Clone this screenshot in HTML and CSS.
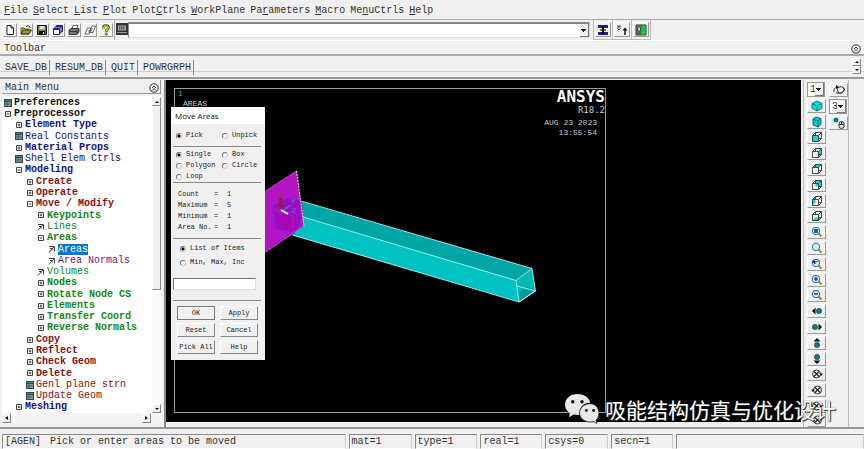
FILE: index.html
```html
<!DOCTYPE html>
<html lang="en">
<head>
<meta charset="utf-8">
<title>ANSYS Multiphysics Utility Menu</title>
<link rel="stylesheet" href="styles.css">
</head>
<body>
<svg class="defs" aria-hidden="true">
  <symbol id="plus" viewBox="0 0 8 8"><path d="M1.5 1.5h5v5h-5zM2.500 4h3M4 2.500v3" fill="none" stroke="#444" stroke-width="1"/></symbol>
  <symbol id="minus" viewBox="0 0 8 8"><path d="M1.500 1.500h5v5h-5zM2.500 4h3" fill="none" stroke="#444" stroke-width="1"/></symbol>
  <symbol id="form" viewBox="0 0 8 8"><path d="M0 0h8v8H0z" fill="#345"/><path d="M1 1h6v1H1z" fill="#299"/><path d="M1 3h6v4H1z" fill="#8b9a90"/><path d="M1 5h6M3 3v4" stroke="#345" stroke-width=".7"/></symbol>
  <symbol id="pick" viewBox="0 0 8 8"><path d="M1 1.500h5.500v5M6 2L3.500 4.500M2 3.500h2v2M3.500 4.500L1 7.500" fill="none" stroke="#444" stroke-width="1"/></symbol>
  <symbol id="chev" viewBox="0 0 10 10"><circle cx="5" cy="5" r="4.200" fill="none" stroke="#333"/><path d="M3 5l2-2 2 2M3 7.500l2-2 2 2" fill="none" stroke="#333"/></symbol>
  <symbol id="cube" viewBox="0 0 12 12"><path d="M1 3.500L6 1l5 2.500v5L6 11 1 8.500z" fill="#0dd" stroke="#066" stroke-width=".8"/><path d="M1 3.500L6 6l5-2.500M6 6v5" fill="none" stroke="#066" stroke-width=".8"/></symbol>
  <symbol id="cubeb" viewBox="0 0 12 12"><path d="M2 3l3-2 5 1.500v6L7 11 2 9z" fill="#0cd" stroke="#055" stroke-width=".8"/><path d="M2 3l5 2 3-2.500M7 5v6" fill="none" stroke="#055" stroke-width=".8"/></symbol>
  <symbol id="wire" viewBox="0 0 12 12"><path d="M1.500 4.500h6v6h-6zM4.500 1.500h6v6h-3M4.500 1.500v3M1.500 4.500l3-3M7.500 4.500l3-3M7.500 10.500l3-3" fill="none" stroke="#333" stroke-width=".9"/></symbol>
  <symbol id="lens" viewBox="0 0 12 12"><path d="M7.500 7.500l3 3" stroke="#a82" stroke-width="2"/><circle cx="5" cy="5" r="3.700" fill="#cef" stroke="#468" stroke-width="1"/></symbol>
  <symbol id="spin" viewBox="0 0 12 12"><circle cx="5.500" cy="6" r="4" fill="none" stroke="#333"/><path d="M3 3.500l5 5M8 3.500l-5 5" stroke="#222" stroke-width="1.200"/><path d="M8.500 5.500h3.500L10 8z" fill="#111"/></symbol>
  <symbol id="pan" viewBox="0 0 12 12"><path d="M1 6l3.500-3.500v7z" fill="#111"/><circle cx="8" cy="6" r="2.700" fill="#177" stroke="#244" stroke-width=".5"/></symbol>
</svg>

<nav class="menubar">
  <a href="#"><u>F</u>ile</a><a href="#"><u>S</u>elect</a><a href="#"><u>L</u>ist</a><a href="#"><u>P</u>lot</a><a href="#">Plot<u>C</u>trls</a><a href="#"><u>W</u>orkPlane</a><a href="#">Pa<u>r</u>ameters</a><a href="#"><u>M</u>acro</a><a href="#">Me<u>n</u>uCtrls</a><a href="#"><u>H</u>elp</a>
</nav>

<div class="iconbar">
  <div class="files">
    <button class="tool" aria-label="New"><svg viewBox="0 0 12 12"><path d="M3 1.500h4l2.500 2.500v6.500H3zM7 1.500V4h2.500" fill="#fff" stroke="#222"/></svg></button>
    <button class="tool" aria-label="Open"><svg viewBox="0 0 12 12"><path d="M1 10V4h3l1 1h4v5z" fill="#cc2" stroke="#332" stroke-width=".8"/><path d="M1 10l2-4h8.500L9 10z" fill="#992" stroke="#221" stroke-width=".8"/><path d="M6 2.500q2-2 4 .5V4" fill="none" stroke="#222"/></svg></button>
    <button class="tool" aria-label="Save"><svg viewBox="0 0 12 12"><path d="M1.500 1.500h9v9h-9z" fill="#773" stroke="#111"/><path d="M3.500 2h5v3.500h-5z" fill="#ddd"/><path d="M3 7h6v4H3z" fill="#111"/><path d="M7 8h1v2H7z" fill="#fff"/></svg></button>
    <button class="tool" aria-label="Copies"><svg viewBox="0 0 12 12"><path d="M4.500 1.500h6v6h-6z" fill="#dde" stroke="#228"/><path d="M3 3h6v6H3z" fill="#dde" stroke="#228"/><path d="M1.500 4.500h6v6h-6z" fill="#fff" stroke="#228"/><path d="M4.500 1.500h6v1.500h-6zM1.500 4.500h6V6h-6z" fill="#22a"/></svg></button>
    <button class="tool" aria-label="Print"><svg viewBox="0 0 12 12"><path d="M4 5l1-3.500h5L8.500 5z" fill="#fff" stroke="#333" stroke-width=".8"/><path d="M1 6l2-1.500h8V8l-2 2.500H1z" fill="#777" stroke="#222" stroke-width=".8"/><path d="M1.500 7.500H9M9 10V7.500l2-2" stroke="#222" fill="none" stroke-width=".8"/></svg></button>
    <button class="tool" aria-label="Report"><svg viewBox="0 0 12 12"><path d="M1 10l2.500-6H7l-2 6zM5 8.500L8 2h3.500L9 8.500z" fill="#fff" stroke="#444" stroke-width=".8"/><path d="M3.500 7h5M5 9l4-5" stroke="#555" stroke-width=".7"/></svg></button>
    <button class="tool" aria-label="Help"><svg viewBox="0 0 12 12"><path d="M3.500 4.500V3q0-1.500 2.500-1.500T8.700 3.500Q8.700 5 6.300 6v2" fill="none" stroke="#443" stroke-width="2.400"/><path d="M3.700 4.500V3.200Q4 2 6 2t2.300 1.600Q8.200 5 6.300 6v1.500" fill="none" stroke="#cc1" stroke-width="1.300"/><circle cx="6.300" cy="10" r="1.300" fill="#aa1" stroke="#443" stroke-width=".5"/></svg></button>
  </div>
  <div class="command">
    <button class="keys" aria-label="Command prompt"><svg viewBox="0 0 12 12"><path d="M0 0h12v12H0z" fill="#333"/><path d="M2 2.500h8v5H2z" fill="#aaa"/><path d="M3 4h6M3 5.800h6M2 9.500h8" stroke="#222" stroke-dasharray="1.200 .6"/><path d="M1 9.500h10" stroke="#999"/></svg></button>
    <span class="combo"><select aria-label="Command input"><option></option></select></span>
  </div>
  <div class="slot"><button class="tool" aria-label="Raise hidden"><svg viewBox="0 0 12 12"><path d="M1 1h10v3H1zM1 8h10v3H1z" fill="#228"/><path d="M6 2v8M3 6h6" stroke="#111" stroke-width="2"/><path d="M2 5.500h3v1H2zM7 5.500h3v1H7z" fill="#dd4"/></svg></button></div>
  <div class="slot"><button class="tool" aria-label="Reset picking"><svg viewBox="0 0 12 12"><path d="M1 2h4M3 2L1.500 4.500 3 6l1.500-1.500z" fill="#dd6" stroke="#333" stroke-width=".8"/><path d="M9 11V6" stroke="#111" stroke-width="1.500"/><path d="M6.500 6.500L9 3.500l2.500 3z" fill="#111"/></svg></button></div>
  <div class="slot"><button class="tool" aria-label="Contact manager"><svg viewBox="0 0 12 12"><path d="M1 1h10v10H1z" fill="#687" stroke="#333"/><path d="M7 1.500h3.500v9H7z" fill="#1c4"/><path d="M2.500 3h3v4h-3zM2 9h4" stroke="#333" fill="#ccc" stroke-width=".8"/></svg></button></div>
</div>

<div class="tooltitle"><span>Toolbar</span><svg><use href="#chev"/></svg></div>
<div class="toolbar">
  <button>SAVE_DB</button><button>RESUM_DB</button><button>QUIT</button><button>POWRGRPH</button>
  <span class="updown"><button class="up" aria-label="Scroll up"></button><button class="down" aria-label="Scroll down"></button></span>
</div>

<main class="main">
  <aside class="side">
    <header><span>Main Menu</span><svg><use href="#chev"/></svg></header>
    <div class="treebox">
      <ul class="tree">
        <li class="l0 black"><svg><use href="#form"/></svg><b>Preferences</b></li>
        <li class="l0 black"><svg><use href="#minus"/></svg><b>Preprocessor</b></li>
        <li class="l1 blue"><svg><use href="#plus"/></svg><b>Element Type</b></li>
        <li class="l1 blue"><svg><use href="#form"/></svg>Real Constants</li>
        <li class="l1 blue"><svg><use href="#plus"/></svg><b>Material Props</b></li>
        <li class="l1 blue"><svg><use href="#form"/></svg>Shell Elem Ctrls</li>
        <li class="l1 blue"><svg><use href="#minus"/></svg><b>Modeling</b></li>
        <li class="l2 red"><svg><use href="#plus"/></svg><b>Create</b></li>
        <li class="l2 red"><svg><use href="#plus"/></svg><b>Operate</b></li>
        <li class="l2 red"><svg><use href="#minus"/></svg><b>Move / Modify</b></li>
        <li class="l3 green"><svg><use href="#plus"/></svg><b>Keypoints</b></li>
        <li class="l3 green"><svg><use href="#pick"/></svg>Lines</li>
        <li class="l3 green"><svg><use href="#minus"/></svg><b>Areas</b></li>
        <li class="l4"><svg><use href="#pick"/></svg><mark>Areas</mark></li>
        <li class="l4 purple"><svg><use href="#pick"/></svg>Area Normals</li>
        <li class="l3 green"><svg><use href="#pick"/></svg>Volumes</li>
        <li class="l3 green"><svg><use href="#plus"/></svg><b>Nodes</b></li>
        <li class="l3 green"><svg><use href="#plus"/></svg><b>Rotate Node CS</b></li>
        <li class="l3 green"><svg><use href="#plus"/></svg><b>Elements</b></li>
        <li class="l3 green"><svg><use href="#plus"/></svg><b>Transfer Coord</b></li>
        <li class="l3 green"><svg><use href="#plus"/></svg><b>Reverse Normals</b></li>
        <li class="l2 red"><svg><use href="#plus"/></svg><b>Copy</b></li>
        <li class="l2 red"><svg><use href="#plus"/></svg><b>Reflect</b></li>
        <li class="l2 red"><svg><use href="#plus"/></svg><b>Check Geom</b></li>
        <li class="l2 red"><svg><use href="#plus"/></svg><b>Delete</b></li>
        <li class="l2 red"><svg><use href="#form"/></svg>Genl plane strn</li>
        <li class="l2 red"><svg><use href="#form"/></svg>Update Geom</li>
        <li class="l1 blue"><svg><use href="#plus"/></svg><b>Meshing</b></li>
      </ul>
      <div class="vscroll"><button class="up" aria-label="Up"></button><span class="thumb"></span><button class="down" aria-label="Down"></button></div>
    </div>
    <div class="hscroll"><button class="left" aria-label="Left"></button><button class="right" aria-label="Right"></button></div>
  </aside>

  <section class="canvas">
    <svg class="model" viewBox="0 0 635 340" preserveAspectRatio="xMinYMin slice">
      <path d="M135 121L366 188.500 350 200.500 125 138z" fill="#00a6a6"/>
      <path d="M125 138L137 137.500 350 200 353 222 127 155.500z" fill="#00c2c2"/>
      <path d="M350 200.500L366 188.500 369.500 211 353 222z" fill="#00b8b8"/>
      <path d="M353 222l-1-8 9-8 8.500 5z" fill="#009c9c"/>
      <path d="M135 121L366 188.500 350 200.500 137 137M366 188.500l3.500 22.500L353 222l-3-21.500M353 222L125 154.500M351 206l18.500 5M353 222l16.500-11" fill="none" stroke="#a9f0ee" stroke-width=".9"/>
      <path d="M98 112L130.500 91 138 146 98 173z" fill="#b414c4"/>
      <path d="M105 127l17-10 14 4 1 17-10 17-20-6z" fill="#a10bbb"/>
      <path d="M105 127l32 9M105 127l17-10 14 4M105 127l3 23 20 5M137 137l-9 17" fill="none" stroke="#7135d9" stroke-width=".8"/>
      <path d="M107 129l20 7v17l-18-4z" fill="none" stroke="#cf49d5" stroke-width=".6" stroke-dasharray="1 1"/>
      <path d="M130.500 91L138 146" stroke="#eec" stroke-dasharray="2 1" stroke-width="1"/>
      <path d="M98 112l32.500-21M138 146l-40 27" stroke="#d05be0" stroke-width=".8"/>
      <path d="M115 131l-3-14 4 1 1 13z" fill="#8b2727"/>
      <path d="M116 131l9-6" stroke="#4967ff" stroke-width="1.300"/>
      <path d="M115 130l7 4" stroke="#fff" stroke-width="1.500"/>
      <path d="M113 112l2 2 2-2M115 114v3" fill="none" stroke="#84425c"/>
      <path d="M125 119l4 4M129 119l-4 4M126 129h4l-4 3h4" fill="none" stroke="#5a61e8"/>
    </svg>
    <div class="frame">
      <div class="plot"><span class="num">1</span><span class="kind">AREAS</span></div>
      <div class="brand"><strong>ANSYS</strong><em>R18.2</em><time>AUG 23 2023<br>13:55:54</time></div>
    </div>

    <form class="dialog" onsubmit="return false">
      <h1>Move Areas</h1>
      <div class="body">
        <div class="opts">
          <label><input type="radio" name="mode" checked>Pick</label><label><input type="radio" name="mode">Unpick</label>
        </div>
        <div class="opts shape">
          <label><input type="radio" name="shape" checked>Single</label><label><input type="radio" name="shape">Box</label>
          <label><input type="radio" name="shape">Polygon</label><label><input type="radio" name="shape">Circle</label>
          <label><input type="radio" name="shape">Loop</label>
        </div>
        <dl>
          <dt>Count</dt><dd>=</dd><dd>1</dd>
          <dt>Maximum</dt><dd>=</dd><dd>5</dd>
          <dt>Minimum</dt><dd>=</dd><dd>1</dd>
          <dt>Area No.</dt><dd>=</dd><dd>1</dd>
        </dl>
        <div class="entry">
          <label><input type="radio" name="entry" checked>List of Items</label>
          <label><input type="radio" name="entry">Min, Max, Inc</label>
          <input type="text" aria-label="Items">
        </div>
        <div class="actions">
          <button class="default">OK</button><button>Apply</button><button>Reset</button><button>Cancel</button><button>Pick All</button><button>Help</button>
        </div>
      </div>
    </form>
  </section>

  <aside class="views">
    <div class="col">
      <span class="pickbox"><select aria-label="Window"><option>1</option></select></span>
      <button class="tool" aria-label="Isometric"><svg><use href="#cube"/></svg></button>
      <button class="tool" aria-label="Oblique"><svg><use href="#cubeb"/></svg></button>
      <button class="tool" aria-label="Front"><svg viewBox="0 0 12 12"><path d="M1.500 4.500h6v6h-6z" fill="#0dd"/><use href="#wire"/></svg></button>
      <button class="tool" aria-label="Right"><svg viewBox="0 0 12 12"><path d="M7.500 4.500l3-3v6l-3 3z" fill="#0dd"/><use href="#wire"/></svg></button>
      <button class="tool" aria-label="Top"><svg viewBox="0 0 12 12"><path d="M1.500 4.500l3-3h6l-3 3z" fill="#0dd"/><use href="#wire"/></svg></button>
      <button class="tool" aria-label="Back"><svg viewBox="0 0 12 12"><path d="M4.500 1.500h6v6h-6z" fill="#0dd"/><use href="#wire"/></svg></button>
      <button class="tool" aria-label="Left"><svg viewBox="0 0 12 12"><path d="M1.500 4.500l3-3v6l-3 3z" fill="#0dd"/><use href="#wire"/></svg></button>
      <button class="tool" aria-label="Bottom"><svg viewBox="0 0 12 12"><path d="M1.500 10.500l3-3h6l-3 3z" fill="#0dd"/><use href="#wire"/></svg></button>
      <button class="tool" aria-label="Fit"><svg viewBox="0 0 12 12"><use href="#lens"/><path d="M3 3h4v4H3z" fill="#077"/></svg></button>
      <button class="tool" aria-label="Zoom"><svg><use href="#lens"/></svg></button>
      <button class="tool" aria-label="Previous zoom"><svg viewBox="0 0 12 12"><use href="#lens"/><path d="M1 3h3v3zM3.500 4l4-1" fill="#22b" stroke="#22b" stroke-width=".8"/></svg></button>
      <button class="tool" aria-label="Zoom in"><svg viewBox="0 0 12 12"><use href="#lens"/><path d="M3 5h4M5 3v4" stroke="#11a" stroke-width="1.200"/></svg></button>
      <button class="tool" aria-label="Zoom out"><svg viewBox="0 0 12 12"><use href="#lens"/><path d="M3 5h4" stroke="#11a" stroke-width="1.200"/></svg></button>
      <button class="tool" aria-label="Pan left"><svg><use href="#pan"/></svg></button>
      <button class="tool" aria-label="Pan right"><svg viewBox="0 0 12 12"><use href="#pan" transform="rotate(180 6 6)"/></svg></button>
      <button class="tool" aria-label="Pan up"><svg viewBox="0 0 12 12"><use href="#pan" transform="rotate(90 6 6)"/></svg></button>
      <button class="tool" aria-label="Pan down"><svg viewBox="0 0 12 12"><use href="#pan" transform="rotate(-90 6 6)"/></svg></button>
      <button class="tool" aria-label="Rotate X+"><svg><use href="#spin"/></svg></button>
      <button class="tool" aria-label="Rotate X-"><svg viewBox="0 0 12 12"><use href="#spin" transform="matrix(-1 0 0 1 12 0)"/></svg></button>
      <button class="tool" aria-label="Rotate Y+"><svg><use href="#spin"/></svg></button>
      <button class="tool" aria-label="Rotate Y-"><svg viewBox="0 0 12 12"><use href="#spin" transform="matrix(-1 0 0 1 12 0)"/></svg></button>
    </div>
    <div class="col">
      <button class="tool" aria-label="Dynamic rotate"><svg viewBox="0 0 12 12"><path d="M1 8q-1-4 4-5M3 9q7 1 8-3t-5-3q-3 2-1 5t5 0 0-4" fill="none" stroke="#333"/><path d="M3 1l3 2-3 2z" fill="#111"/></svg></button>
      <span class="pickbox"><select aria-label="Rate"><option>3</option></select></span>
      <button class="tool" aria-label="Model mode"><svg viewBox="0 0 12 12"><circle cx="3" cy="3" r="2.500" fill="#177"/><path d="M6 6.500q0-2 2.500-2T11 6.500v3q0 2-2.500 2T6 9.500zM6 7.500h5M8.500 4.500v3" fill="#ddd" stroke="#222" stroke-width=".9"/></svg></button>
    </div>
  </aside>
</main>

<footer class="status">
  <span class="prompt"><span>[AGEN]</span><span>Pick or enter areas to be moved</span></span><span>mat=1</span><span>type=1</span><span>real=1</span><span>csys=0</span><span>secn=1</span><span></span>
</footer>

<div class="watermark">
  <svg viewBox="0 0 36 32"><path d="M14 1C6 1 1 6 1 12c0 4 2 6.500 5 8.500L5 25l5-2.700q3 .7 6 .4C15 15 20 10 27 10 26 5 21 1 14 1z" fill="#e8e8e8"/><path d="M27 11c-6 0-11 4-11 9.500S21 30 27 30q2 0 3.500-.5L34 31.500l-1-3.200c2-2 3-4.500 3-7.300C36 15 32 11 27 11z" fill="#e8e8e8" stroke="#222" stroke-width=".8"/><circle cx="9" cy="9" r="1.800" fill="#111"/><circle cx="18.500" cy="9" r="1.800" fill="#111"/><circle cx="23" cy="18" r="1.500" fill="#111"/><circle cx="30.500" cy="18" r="1.500" fill="#111"/></svg>
  <span lang="zh">吸能结构仿真与优化设计</span>
</div>
</body>
</html>
```
FILE: styles.css
```css
* { box-sizing: border-box; }
html, body { height: 100%; }
body {
  margin: 0;
  display: flex;
  flex-direction: column;
  overflow: hidden;
  background: #f0f0f0;
  color: #333;
  font: 10px/12px "Liberation Mono", monospace;
}
button, select, input { font: inherit; color: inherit; margin: 0; padding: 0; border: 0; border-radius: 0; background: none; }
a { color: inherit; text-decoration: none; }
.defs { position: absolute; width: 0; height: 0; }

.menubar { display: flex; gap: 5px; height: 20px; padding: 5px 4px 0; border-bottom: 1px solid #aaa; flex: none; white-space: nowrap; }

.iconbar { display: flex; height: 21px; flex: none; align-items: stretch; border-bottom: 1px solid #fff; }
.files { display: flex; gap: 2px; padding: 3px 3px; border-right: 1px solid #aaa; width: 115px; }
.tool {
  display: flex; align-items: center; justify-content: center;
  width: 14px; height: 14px;
  border: 1px solid; border-color: #fff #999 #999 #fff;
  background: #f0f0f0;
}
.tool svg { width: 12px; height: 12px; flex: none; }
.command { display: flex; flex: 0 1 479px; padding: 2px 3px 2px 1px; border-right: 1px solid #bbb; }
.keys { width: 12px; height: 14px; display: flex; align-items: center; }
.keys svg { width: 12px; height: 12px; }
.combo { position: relative; flex: 1; display: flex; border: 1px solid; border-color: #888 #ddd #ddd #888; border-top-width: 2px; background: #fff; }
.combo select { flex: 1; appearance: none; }
.combo::after, .pickbox::after {
  content: "";
  position: absolute; right: 0; top: 0; bottom: 0; width: 8px;
  background: linear-gradient(#111, #111) 1px 5px / 5px 1px no-repeat, linear-gradient(#111, #111) 2px 6px / 3px 1px no-repeat, linear-gradient(#111, #111) 3px 7px / 1px 1px no-repeat, #f0f0f0;
  border-right: 1px solid #777; border-bottom: 1px solid #777;
  pointer-events: none;
}
.slot { padding: 2px 1px; border-right: 1px solid #bbb; border-bottom: 1px solid #bbb; }
.slot .tool { width: 16px; height: 15px; }

.tooltitle { display: flex; justify-content: space-between; align-items: center; height: 15px; padding: 2px 3px 0 4px; border-bottom: 2px solid #aaa; flex: none; }
.tooltitle svg, .side header svg { width: 10px; height: 10px; }
.toolbar { display: flex; height: 23px; padding: 2px 3px 0 0; flex: none; border-bottom: 2px solid #999; box-shadow: inset 0 -5px #f0f0f0, inset 0 -6px #ccc; }
.toolbar > button { height: 15px; margin-top: 2px; padding: 0 2px 0 5px; border-right: 1px solid #888; }
.updown { margin-left: auto; display: flex; flex-direction: column; }
.up, .down, .left, .right { width: 9px; height: 8px; border: 1px solid; border-color: #fff #888 #888 #fff; display: flex; align-items: center; justify-content: center; background: #f0f0f0; }
.up::before, .down::before { content: ""; border: 2px solid transparent; border-top-width: 0; border-bottom-color: #111; }
.down::before { border-top: 2px solid #111; border-bottom-width: 0; }
.left::before, .right::before { content: ""; border: 2px solid transparent; border-left-width: 0; border-right: 3px solid #111; }
.right::before { border-left: 3px solid #111; border-right-width: 0; }

.main { flex: 1; min-height: 0; display: grid; grid-template-columns: 166px minmax(0, 1fr) 63px; grid-template-rows: 100%; border-bottom: 2px solid #999; padding-top: 1px; }
.side { display: flex; flex-direction: column; padding: 0 3px 4px 2px; border-right: 2px solid #888; min-height: 0; }
.side header { display: flex; justify-content: space-between; align-items: center; flex: none; height: 14px; padding: 2px 1px 0 3px; border-right: 1px solid #999; border-bottom: 1px solid #999; }
.treebox { flex: 1; min-height: 0; display: flex; background: #fff; margin-top: 2px; padding-top: 1px; overflow: hidden; }
.tree { flex: 1; list-style: none; margin: 0; padding: 0; display: grid; grid-auto-rows: minmax(0, 1fr); white-space: pre; overflow: hidden; }
.tree li { display: flex; align-items: center; gap: 2px; }
.tree svg { width: 8px; height: 8px; flex: none; }
.l0 { padding-left: 2px; }
.l1 { padding-left: 13px; }
.l2 { padding-left: 24px; }
.l3 { padding-left: 35px; }
.l4 { padding-left: 46px; }
.black { color: #111; }
.blue { color: #118; }
.red { color: #811; }
.green { color: #181; }
.purple { color: #717; }
.tree mark { background: #0078d7; color: #fff; line-height: 11px; }
.vscroll { width: 9px; display: flex; flex-direction: column; background: #fafafa; }
.vscroll button { height: 9px; flex: none; }
.thumb { height: 184px; background: #f0f0f0; border: 1px solid; border-color: #fff #888 #888 #fff; }
.vscroll .down { margin-top: auto; }
.hscroll { height: 10px; flex: none; display: flex; justify-content: space-between; padding-right: 10px; background: #f4f4f4; }
.hscroll button { height: 10px; width: 9px; }

.canvas { position: relative; background: #000; overflow: hidden; margin-bottom: 5px; }
.model { position: absolute; left: 0; top: 0; width: 635px; height: 340px; }
.frame { position: absolute; left: 8px; top: 8px; bottom: 9px; width: 432px; border: 1px solid #999; display: flex; justify-content: space-between; color: #ccc; }
.plot { display: flex; flex-direction: column; padding-left: 3px; font-size: 8px; line-height: 10px; }
.num { color: #2b9; }
.kind { padding-left: 5px; }
.brand { display: flex; flex-direction: column; text-align: right; font-family: "DejaVu Sans Mono", monospace; }
.brand strong { font-size: 16px; line-height: 16px; color: #fff; }
.brand em { font-style: normal; font-size: 9px; line-height: 11px; }
.brand time { font-size: 8px; line-height: 10px; font-family: "Liberation Mono", monospace; padding: 2px 8px 0 0; }

.dialog { position: absolute; left: 5px; top: 27px; width: 94px; background: #f0f0f0; font-size: 7px; line-height: 11px; color: #222; }
.dialog h1 { margin: 0; padding-left: 4px; height: 17px; background: #fff; font: 8px/17px "Open Sans", sans-serif; color: #111; }
.body { padding: 6px 4px 6px 2px; white-space: nowrap; }
.opts { display: grid; grid-template-columns: 46px 1fr; padding: 0 0 5px 3px; border-bottom: 1px solid #888; }
.shape { padding: 2px 0 0 3px; }
.dialog label { display: flex; align-items: center; gap: 4px; height: 11px; }
.dialog [type="radio"] { appearance: none; width: 6px; height: 6px; border: 1px solid; border-color: #777 #ccc #ccc #777; border-radius: 50%; background: #fff; }
.dialog [type="radio"]:checked { background: radial-gradient(#000 0 1px, #fff 2px); }
.dialog dl { display: grid; grid-template-columns: 36px 13px 1fr; margin: 0; padding: 6px 0 5px 5px; border-bottom: 1px solid #888; }
.dialog dd { margin: 0; }
.entry { display: flex; flex-direction: column; gap: 3px; padding: 4px 0 10px; border-bottom: 1px solid #888; }
.entry label { padding-left: 7px; }
.entry [type="text"] { width: 83px; height: 12px; margin-top: 7px; background: #fff; border: 1px solid; border-color: #777 #ddd #ddd #777; }
.actions { display: grid; grid-template-columns: 38px 38px; gap: 3px 5px; padding: 5px 0 0 4px; }
.actions button { height: 14px; line-height: 11px; border: 1px solid; border-color: #fff #888 #888 #fff; }
.actions .default { border-color: #777; }

.views { display: flex; gap: 3px; padding: 2px 0 1px 3px; margin: 0 15px 0 2px; border: 1px solid #bbb; border-width: 0 1px 0 1px; overflow: hidden; }
.col { display: grid; grid-template-rows: repeat(21, minmax(0, 1fr)); grid-auto-rows: 12px; align-items: center; align-content: start; width: 19px; height: 100%; }
.views .tool { width: 19px; height: 14px; overflow: hidden; }
.pickbox { position: relative; display: flex; height: 15px; width: 18px; background: #fff; border: 1px solid #999; }
.pickbox select { appearance: none; width: 100%; padding-left: 2px; }

.status { flex: none; height: 20px; padding: 5px 0 0 2px; display: grid; grid-template-columns: 344fr 63fr 63fr 62fr 63fr 62fr 188fr; gap: 3px; white-space: nowrap; }
.status > span { border: 1px solid; border-color: #888 #ccc #fff #888; padding: 1px 2px 0; }
.prompt { display: flex; gap: 9px; }

.watermark { position: absolute; right: 28px; bottom: 25px; display: flex; align-items: center; gap: 6px; color: #fff; font: 21px/28px "Noto Sans CJK SC", sans-serif; text-shadow: 1px 1px 1px #222, 0 0 1px #444; }
.watermark svg { width: 35px; height: 31px; }
```
